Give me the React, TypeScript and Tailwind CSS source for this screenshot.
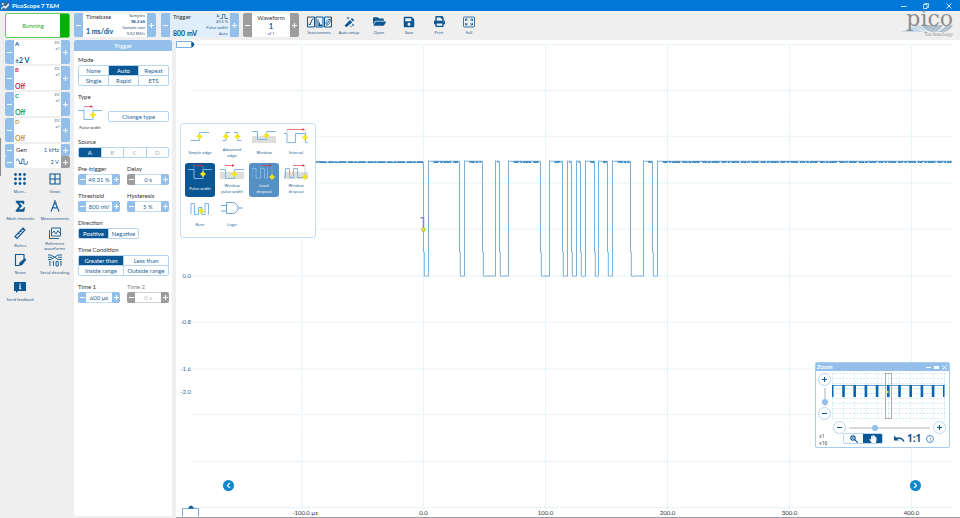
import { ReactNode } from 'react';
import clsx from 'clsx';
import { FaFolderOpen, FaHandPaper, FaPrint, FaSave } from 'react-icons/fa';
import { ChevronLeft, ChevronRight } from 'lucide-react';

/* ---------- shared controls ---------- */

function Sign({ plus }: { plus?: boolean }) {
  return (
    <svg className="h-[5px] w-[5px]" viewBox="0 0 5 5" stroke="currentColor" strokeWidth="1" aria-hidden="true">
      <path d={plus ? 'M0 2.5h5M2.5 0v5' : 'M0 2.5h5'} />
    </svg>
  );
}

function SideButton({ plus, gray, label }: { plus?: boolean; gray?: boolean; label: string }) {
  return (
    <button
      type="button"
      aria-label={label}
      className={clsx(
        'flex w-[9px] shrink-0 items-center justify-center text-white',
        gray ? 'bg-[#9d9d9f]' : 'bg-[#93bfea]',
        plus ? 'rounded-r-[2px]' : 'rounded-l-[2px]'
      )}
    >
      <Sign plus={plus} />
    </button>
  );
}

interface StepperProps {
  id: string;
  label: string;
  value: string;
  grayMinus?: boolean;
  disabled?: boolean;
}

function Stepper({ id, label, value, grayMinus, disabled }: StepperProps) {
  return (
    <div className="flex w-[42px] flex-col gap-px">
      <label htmlFor={id} className={clsx('text-[6px] leading-[8px] whitespace-nowrap', disabled && 'text-[#808080]')}>
        {label}
      </label>
      <div className="flex h-[11px]">
        <button
          type="button"
          aria-label={`Decrease ${label}`}
          className={clsx(
            'flex w-[8px] shrink-0 items-center justify-center rounded-l-[2px] text-white',
            grayMinus || disabled ? 'bg-[#9d9d9f]' : 'bg-[#93bfea]'
          )}
        >
          <Sign />
        </button>
        <input
          id={id}
          type="text"
          defaultValue={value}
          disabled={disabled}
          className={clsx(
            'w-0 min-w-0 flex-1 border-y bg-white text-center text-[6px] leading-[8px] outline-none',
            disabled ? 'border-[#d0d0d0] text-[#b9b9b9]' : 'border-[#c3def5] text-[#1c5f96]'
          )}
        />
        <button
          type="button"
          aria-label={`Increase ${label}`}
          className={clsx(
            'flex w-[8px] shrink-0 items-center justify-center rounded-r-[2px] text-white',
            disabled ? 'bg-[#9d9d9f]' : 'bg-[#93bfea]'
          )}
        >
          <Sign plus />
        </button>
      </div>
    </div>
  );
}

function Section({ title, children }: { title: string; children: ReactNode }) {
  return (
    <section className="flex flex-col gap-px">
      <h3 className="text-[6px] leading-[8px]">{title}</h3>
      {children}
    </section>
  );
}

interface ChoiceProps {
  name: string;
  options: string[];
  selected: string;
  columns: string;
  muted?: string[];
}

function Choice({ name, options, selected, columns, muted = [] }: ChoiceProps) {
  return (
    <div
      role="group"
      aria-label={name}
      className={clsx('grid gap-px overflow-hidden rounded-[2px] border border-[#b5d6f3] bg-[#b5d6f3]', columns)}
    >
      {options.map((option) => (
        <button
          key={option}
          type="button"
          aria-pressed={option === selected}
          className={clsx(
            'h-[9px] text-[6px] leading-[9px] whitespace-nowrap',
            option === selected
              ? 'bg-[#0b5794] text-white'
              : muted.includes(option)
                ? 'bg-white text-[#a9b1b8]'
                : 'bg-white text-[#1c5f96]'
          )}
        >
          {option}
        </button>
      ))}
    </div>
  );
}

/* ---------- trigger drawings ---------- */

const Diamond = ({ x, y }: { x: number; y: number }) => (
  <path
    d={`M${x} ${y - 3}l1.3 1.7 1.7 1.3-1.7 1.3-1.3 1.7-1.3-1.7-1.7-1.3 1.7-1.3z`}
    fill="#f2e61c"
    stroke="#d8cf20"
    strokeWidth=".3"
  />
);

const RedArrow = ({ from, to, y }: { from: number; to: number; y: number }) => (
  <g>
    <path d={`M${from} ${y}H${to - 1}`} stroke="#dc3c4c" strokeWidth=".7" />
    <path d={`M${to - 2.5} ${y - 1.3}L${to} ${y}l-2.5 1.3z`} fill="#dc2538" />
  </g>
);

interface Glyph {
  band?: boolean;
  line: string;
  guides?: string;
  arrow?: [number, number, number];
  diamonds: [number, number][];
}

const glyphs: Record<string, Glyph> = {
  'Simple edge': { line: 'M2.5 13.500H11.500V5.500h9.500', diamonds: [[11.5, 9.5]] },
  'Advanced edge': { line: 'M2.500 13.500H6V5.500h4M14 5.500h3.500v8h4', diamonds: [[6, 9.5], [17.5, 9.5]] },
  Window: { band: true, line: 'M0 4.500H5.500V12.500h9V4.500h9.500', diamonds: [[14.5, 8.5]] },
  Interval: { line: 'M0 6.500H3V15.500h8.500V6.500h10V15.500h2.500', guides: 'M3 3v4M21.500 3v4', arrow: [3, 21, 2.5], diamonds: [[21, 10.5]] },
  'Pulse width': { line: 'M0 6.500H6V15.500h9V6.500h9', guides: 'M6 3v4M15 3v4', arrow: [6, 15, 2.5], diamonds: [[15, 11]] },
  'Window pulse width': { band: true, line: 'M0 6.500H5.500V15.500h9V6.500h9.500', arrow: [5, 14.5, 2.5], diamonds: [[14.5, 11]] },
  'Level dropout': { line: 'M0 15V5.500h4v9.500h4.500V5.500h4v9.500h3V5.500', guides: 'M9 3v3M20 2.500V15', arrow: [9, 20, 2.5], diamonds: [[20, 14]] },
  'Window dropout': { band: true, line: 'M0 14.500h1.500V5.500h4v9h4V5.500h4v9h10', guides: 'M21 2.500V15', arrow: [9, 21, 2.5], diamonds: [[21, 14]] },
  Runt: { line: 'M3 15.500V4.500h3.500v11h4V8.500h3.500v7h3V4.500h3.500v11', diamonds: [[13, 12]] },
};

function TriggerGlyph({ name, className }: { name: string; className?: string }) {
  if (name === 'Logic') {
    return (
      <svg className={className} viewBox="0 0 24 18" fill="none" stroke="#5b9bd0" strokeWidth=".9" aria-hidden="true">
        <path d="M6.500 3.500h6a5.500 5.500 0 0 1 0 11h-6zM1 6.500h5.500M1 12h5.500M18 9h5" />
      </svg>
    );
  }
  const glyph = glyphs[name];
  return (
    <svg className={className} viewBox="0 0 24 18" fill="none" aria-hidden="true">
      {glyph.band && <path d="M0 9h24v7H0z" fill="#dededb" />}
      <path d={glyph.line} stroke="#80b6e3" strokeWidth="1" />
      {glyph.guides && <path d={glyph.guides} stroke="#80b6e3" strokeWidth=".5" />}
      {glyph.arrow && <RedArrow from={glyph.arrow[0]} to={glyph.arrow[1]} y={glyph.arrow[2]} />}
      {glyph.diamonds.map(([x, y]) => (
        <Diamond key={x} x={x} y={y} />
      ))}
    </svg>
  );
}

/* ---------- title bar and toolbar ---------- */

function TitleBar() {
  return (
    <header className="flex h-[11px] items-center gap-[3px] bg-[#0078d9] px-px text-white">
      <svg className="h-[8px] w-[8px]" viewBox="0 0 9 9" aria-hidden="true">
        <path d="M0 0h9v9H0z" fill="#3c6b94" />
        <path d="M0 7l3-3 2 1 4-4v3L5 8 3 6 0 9zM1 1h2v2H1z" fill="#e8f1f8" />
      </svg>
      <h1 className="flex-1 text-[6px] leading-[9px] font-bold">PicoScope 7 T&amp;M</h1>
      <button type="button" aria-label="Minimise" className="w-[19px]">
        <svg className="h-[6px] w-[6px]" viewBox="0 0 6 6" stroke="currentColor" strokeWidth=".8"><path d="M0 3.500h5.500" /></svg>
      </button>
      <button type="button" aria-label="Restore" className="w-[20px]">
        <svg className="h-[6px] w-[6px]" viewBox="0 0 6 6" fill="none" stroke="currentColor" strokeWidth=".7">
          <path d="M.5 1.500h3.500v4H.5zM1.500 1.500V.5h4v4H4" />
        </svg>
      </button>
      <button type="button" aria-label="Close" className="w-[13px]">
        <svg className="h-[6px] w-[6px]" viewBox="0 0 6 6" stroke="currentColor" strokeWidth=".8"><path d="M.5.5l5 5M5.500.5l-5 5" /></svg>
      </button>
    </header>
  );
}

interface ToolButtonProps {
  label: string;
  children: ReactNode;
}

function ToolButton({ label, children }: ToolButtonProps) {
  return (
    <button type="button" className="flex w-[30px] flex-col items-center gap-[2px] text-[#0b5794]">
      <span className="flex h-[13px] items-center">{children}</span>
      <span className="font-['Noto_Sans',sans-serif] text-[4px] leading-[5px] text-[#1f5583]">{label}</span>
    </button>
  );
}

function Toolbar() {
  return (
    <div className="flex h-[28px] items-center gap-1 pr-[7px] pl-[5px]">
      <button type="button" className="flex h-[25px] w-[65px] overflow-hidden rounded-[2px] border border-[#5fd05f] bg-white">
        <span className="flex-1 self-center text-[6px] text-[#1fa81f]">Running</span>
        <span className="h-full w-[9px] bg-[#06b006]" />
      </button>

      <div className="flex h-[24px] w-[82px]">
        <SideButton label="Faster timebase" />
        <div className="flex flex-1 justify-between bg-white pr-[2px] pl-[3px] whitespace-nowrap">
          <div className="flex flex-col justify-between">
            <span className="text-[6px] leading-[8px]">Timebase</span>
            <span className="text-[7px] leading-[12px] font-bold text-[#0b5794]">1 ms/div</span>
          </div>
          <div className="text-right font-['Noto_Sans',sans-serif] text-[4px] leading-[6px] text-[#2f4f70]">
            <div>Samples</div>
            <div className="font-bold text-[#0b5794]">96.2 kS</div>
            <div>Sample rate</div>
            <div>9.62 MS/s</div>
          </div>
        </div>
        <SideButton plus label="Slower timebase" />
      </div>

      <div className="ml-px flex h-[24px] w-[78px]">
        <SideButton label="Lower trigger level" />
        <div className="flex flex-1 justify-between bg-[#e0effb] pr-[2px] pl-[3px] whitespace-nowrap">
          <div className="flex flex-col justify-between">
            <span className="text-[6px] leading-[8px]">Trigger</span>
            <span className="text-[7px] leading-[8px] font-bold text-[#0b5794]">800 mV</span>
          </div>
          <div className="text-right font-['Noto_Sans',sans-serif] text-[4px] leading-[6px] text-[#2f5f8c]">
            <div className="flex items-center justify-end gap-px">
              <span>A</span>
              <svg className="h-[5px] w-[8px]" viewBox="0 0 8 5" fill="none" stroke="currentColor" strokeWidth=".8" aria-hidden="true">
                <path d="M0 4.500h2.500v-4H5v4h3" />
              </svg>
            </div>
            <div>49.3 %</div>
            <div>Pulse width</div>
            <div>Auto</div>
          </div>
        </div>
        <SideButton plus label="Raise trigger level" />
      </div>

      <div className="flex h-[24px] w-[56px]">
        <SideButton gray label="Previous waveform" />
        <div className="flex flex-1 flex-col items-center justify-between bg-white">
          <span className="text-[6px] leading-[9px]">Waveform</span>
          <span className="text-[7px] leading-[8px] font-bold text-[#0b5794]">1</span>
          <span className="font-['Noto_Sans',sans-serif] text-[4px] leading-[7px] text-[#2f4f70]">of 1</span>
        </div>
        <SideButton plus gray label="Next waveform" />
      </div>

      <nav className="ml-px flex">
        <ToolButton label="Instruments">
          <svg className="h-[12px] w-[25px]" viewBox="0 0 25 12" fill="none" stroke="currentColor" strokeWidth="1">
            <path d="M.5 1h7v10h-7zM9 1h7v10H9zM17.500 1h7v10h-7z" />
            <path d="M1.500 8l1.500 1 2-5.500L6.500 3M11 3.500v6h4M12.500 9V6.500M14 9V8" />
            <path d="M19 9.500l4.500-7M19 8c-.5-3 3-5.500 4-4.500s0 5-3 5.500" strokeWidth=".8" />
          </svg>
        </ToolButton>
        <ToolButton label="Auto setup">
          <svg className="h-[12px] w-[11px]" viewBox="0 0 11 12" fill="currentColor">
            <path d="M6 4l2.300 2.300-6 5L.5 9.500zM6.800 3.200L8 2l2.300 2.300L9 5.500zM4 .5l.5 1.200L5.700 2l-1.200.5L4 3.700l-.5-1.200L2.300 2l1.200-.3zM9 7.500l.4 1.100 1.100.4-1.100.4L9 10.500l-.4-1.100L7.500 9l1.100-.4zM6.500 10h1v1h-1z" />
          </svg>
        </ToolButton>
        <ToolButton label="Open"><FaFolderOpen className="h-[13px] w-[13px]" /></ToolButton>
        <ToolButton label="Save"><FaSave className="h-[12px] w-[12px]" /></ToolButton>
        <ToolButton label="Print"><FaPrint className="h-[11px] w-[11px]" /></ToolButton>
        <ToolButton label="Full">
          <svg className="h-[12px] w-[12px]" viewBox="0 0 12 12" fill="none" stroke="currentColor" strokeWidth=".8">
            <rect x=".5" y="1" width="11" height="10" rx="1" />
            <path d="M2.500 5V3h2M7.500 3h2v2M9.500 7v2h-2M4.500 9h-2V7M2.500 3l2 2M9.500 3l-2 2M9.500 9l-2-2M2.500 9l2-2" />
          </svg>
        </ToolButton>
      </nav>

      <div className="relative ml-auto h-[28px] w-[52px] text-right text-[#8b8e92]">
        <svg className="absolute inset-x-0 top-[13px] h-[9px] w-full" viewBox="0 0 52 9" aria-hidden="true">
          <path d="M0 8Q11 4 15 1q3 7 9 7zM14 1q6 0 9 4t8 3Q21 9 14 1z" fill="#c5d9e9" />
          <path d="M20 1q6 7 12 7t10-7zM34 8q8-1 11-7h7q-4 7-10 7z" fill="#a9bccb" />
          <path d="M27 8l7-7M32 8l7-7M37 8l7-7M42 8l7-7" stroke="#efefef" strokeWidth=".5" />
        </svg>
        <div className="relative font-['DejaVu_Serif',serif] text-[22px] leading-[16px]">pico</div>
        <div className="relative font-['DejaVu_Serif',serif] text-[5px] leading-[15px]">Technology</div>
      </div>
    </div>
  );
}

/* ---------- left column ---------- */

const channels = [
  { name: 'A', range: '±2 V', color: 'text-[#0b5794]' },
  { name: 'B', range: 'Off', color: 'text-[#dc1f45]' },
  { name: 'C', range: 'Off', color: 'text-[#159a53]' },
  { name: 'D', range: 'Off', color: 'text-[#c49a35]' },
];

function ChannelCard({ name, range, color }: { name: string; range: string; color: string }) {
  return (
    <div className="flex h-[24px]">
      <SideButton label={`Decrease channel ${name} range`} />
      <div className="flex flex-1 justify-between bg-white px-px">
        <div className={clsx('flex flex-col justify-between', color)}>
          <span className="text-[6px] leading-[8px] font-bold">{name}</span>
          <span className="text-[7px] leading-[8px] font-bold">{range}</span>
        </div>
        <div className="text-right font-['Noto_Sans',sans-serif] text-[4px] leading-[6px] text-[#2f4f70]">
          <div>DC</div>
          <div>x1</div>
        </div>
      </div>
      <SideButton plus label={`Increase channel ${name} range`} />
    </div>
  );
}

const tools: { label: string; icon: ReactNode }[] = [
  {
    label: 'More...',
    icon: (
      <g fill="currentColor" stroke="none">
        {[2.5, 7, 11.5].map((y) => [2.5, 7, 11.5].map((x) => <circle key={`${x}-${y}`} cx={x} cy={y} r="1.400" />))}
      </g>
    ),
  },
  { label: 'Views', icon: <path d="M2 2h10v10H2zM7 2v10M2 7h10" /> },
  { label: 'Math channels', icon: <path d="M3 2h8v3h-.8L9 3.500H6L9 7l-3.500 3.500h4L11 8.500h.8L11 12.500H3v-1L6.500 7 3 3z" fill="currentColor" strokeWidth=".5" /> },
  { label: 'Measurements', icon: <path d="M7 1v2M6.300 4.500L3 12.500M7.700 4.500l3.300 8M5 8.500q2.500 1 4 0M7 3a1 1 0 1 0 .1 0" /> },
  { label: 'Rulers', icon: <path d="M2 10.500L10 2l2 2-8 8.500zM5.500 7l1 1M7.500 5l1 1M9.500 3l1 1" /> },
  { label: 'Reference waveforms', icon: <path d="M3.500 2h9v8h-9zM1.500 4v8.500h9.500M4 7.500l2-2.500 2 3 2-3.500 2 3" strokeWidth=".9" /> },
  { label: 'Notes', icon: <g><path d="M11 6V1.500H2.500v11H6" /><path d="M12 5l1 2-4 5-3 .8.500-3z" fill="currentColor" strokeWidth=".3" /></g> },
  { label: 'Serial decoding', icon: <path d="M0 2h3l7 4.500h4M0 6.500h3L10 2h4M0 4.300h4M10 4.300h4M1 9l1-.7V13M4.500 9l1-.7V13M8 8.500h2.200V13H8zM12 9l1-.7V13" strokeWidth=".9" /> },
  {
    label: 'Send feedback',
    icon: (
      <g stroke="none">
        <path d="M1 2h12v9H5l-2 2v-2H1z" fill="currentColor" />
        <path d="M6.500 3.500h1.200v1.200H6.500zM6 5.500h1.700v3h.6v.8H6v-.8h.6v-2H6z" fill="#fff" />
      </g>
    ),
  },
];

function LeftColumn() {
  return (
    <aside className="relative flex w-[74px] shrink-0 flex-col gap-1 pt-px pr-1 pl-[5px]">
      <div className="absolute top-[99px] left-0 h-[38px] w-px bg-[#8a8a8a]" />
      <div className="flex flex-col gap-[2px]">
        {channels.map((channel) => (
          <ChannelCard key={channel.name} {...channel} />
        ))}
        <div className="flex flex-col">
          <div className="flex h-[12px]">
            <SideButton label="Decrease generator frequency" />
            <div className="flex flex-1 items-center justify-between bg-white px-[2px] text-[6px] leading-[8px]">
              <span>Gen</span>
              <span className="text-[#1c5f96]">1 kHz</span>
            </div>
            <SideButton plus label="Increase generator frequency" />
          </div>
          <div className="flex h-[12px]">
            <SideButton label="Decrease generator amplitude" />
            <div className="flex flex-1 items-center justify-between bg-white px-[2px] text-[6px] leading-[8px] text-[#1c5f96]">
              <svg className="h-[8px] w-[12px]" viewBox="0 0 12 8" fill="none" stroke="currentColor" strokeWidth=".8" aria-hidden="true">
                <path d="M0 3q1.500-4 3 0t3 0V1h2v5h1.500q.8 2 1.500 0T12 3M3 5.500h4" />
              </svg>
              <span>2 V</span>
            </div>
            <SideButton plus gray label="Increase generator amplitude" />
          </div>
        </div>
      </div>
      <nav className="-mx-[2px] grid grid-cols-2 gap-y-[2px]">
        {tools.map((tool) => (
          <button key={tool.label} type="button" className="flex h-[25px] flex-col items-center text-[#0b5794]">
            <svg className="h-[14px] w-[14px] shrink-0" viewBox="0 0 14 14" fill="none" stroke="currentColor" strokeWidth="1.100" aria-hidden="true">
              {tool.icon}
            </svg>
            <span
              className={clsx(
                "flex h-[11px] items-center text-center font-['Noto_Sans',sans-serif] text-[4px] leading-[5px] text-[#1f5583]",
                tool.label === 'Reference waveforms' ? 'w-[24px]' : 'whitespace-nowrap'
              )}
            >
              {tool.label}
            </span>
          </button>
        ))}
      </nav>
    </aside>
  );
}

/* ---------- trigger panel ---------- */

function TriggerPanel() {
  return (
    <aside className="mt-px mb-[2px] w-[98px] shrink-0 rounded-[2px] bg-white">
      <h2 className="rounded-t-[2px] bg-[#93bfea] text-center text-[6px] leading-[11px] text-white">Trigger</h2>
      <div className="flex flex-col gap-[7px] pt-[5px] pr-[3px] pl-1">
        <Section title="Mode">
          <Choice name="Mode" columns="grid-cols-3" selected="Auto" options={['None', 'Auto', 'Repeat', 'Single', 'Rapid', 'ETS']} />
        </Section>
        <Section title="Type">
          <div className="flex h-[29px] justify-between">
            <div className="flex w-[24px] flex-col items-center pt-[2px]">
              <TriggerGlyph name="Pulse width" className="h-[18px] w-[24px] shrink-0" />
              <span className="mt-[3px] font-['Noto_Sans',sans-serif] text-[4px] leading-[5px] whitespace-nowrap">Pulse width</span>
            </div>
            <button
              type="button"
              className="mt-[9px] h-[11px] w-[61px] rounded-[2px] border border-[#b5d6f3] text-[6px] leading-[9px] text-[#1c5f96]"
            >
              Change type
            </button>
          </div>
        </Section>
        <Section title="Source">
          <Choice name="Source" columns="grid-cols-4" selected="A" muted={['B', 'C', 'D']} options={['A', 'B', 'C', 'D']} />
        </Section>
        <div className="flex justify-between">
          <Stepper id="pre-trigger" label="Pre-trigger" value="49.31 %" />
          <Stepper id="delay" label="Delay" value="0 s" grayMinus />
        </div>
        <div className="flex justify-between">
          <Stepper id="threshold" label="Threshold" value="800 mV" />
          <Stepper id="hysteresis" label="Hysteresis" value="5 %" />
        </div>
        <Section title="Direction">
          <div className="w-[61px]">
            <Choice name="Direction" columns="grid-cols-2" selected="Positive" options={['Positive', 'Negative']} />
          </div>
        </Section>
        <Section title="Time Condition">
          <Choice
            name="Time Condition"
            columns="grid-cols-2"
            selected="Greater than"
            options={['Greater than', 'Less than', 'Inside range', 'Outside range']}
          />
        </Section>
        <div className="flex justify-between">
          <Stepper id="time-1" label="Time 1" value="600 µs" />
          <Stepper id="time-2" label="Time 2" value="0 s" disabled />
        </div>
      </div>
    </aside>
  );
}

const triggerTypes = [
  'Simple edge',
  'Advanced edge',
  'Window',
  'Interval',
  'Pulse width',
  'Window pulse width',
  'Level dropout',
  'Window dropout',
  'Runt',
  'Logic',
];

function TriggerTypeMenu() {
  return (
    <div className="absolute top-[83px] left-1 grid h-[115px] w-[136px] auto-rows-[34px] grid-cols-4 gap-[2px] rounded-[3px] border border-[#c3def5] bg-white px-1 pt-[3px]">
      {triggerTypes.map((type) => (
        <button
          key={type}
          type="button"
          className={clsx(
            'flex flex-col items-center rounded-[3px]',
            type === 'Pulse width' && 'bg-[#0b5794] text-white',
            type === 'Level dropout' && 'bg-[#5590c5] text-white',
            type !== 'Pulse width' && type !== 'Level dropout' && 'text-[#1c5f96]'
          )}
        >
          <TriggerGlyph name={type} className="h-[18px] w-[24px] shrink-0" />
          <span
            className={clsx(
              "flex h-[16px] items-center justify-center text-center font-['Noto_Sans',sans-serif] text-[4px] leading-[6px]",
              type === 'Simple edge' ? 'whitespace-nowrap' : 'w-[23px]'
            )}
          >
            {type}
          </span>
        </button>
      ))}
    </div>
  );
}

/* ---------- scope view ---------- */

const PLOT_W = 784;
const PLOT_H = 478;
const HIGH = 122.5;
const LOW = 236.5;

// [start of fall, start of rise] of every low pulse
const pulses: [number, number][] = [
  [247.5, 252.5],
  [283.5, 288.5],
  [306.5, 319.5],
  [323.5, 332.5],
  [364.5, 373.5],
  [386.5, 391.5],
  [395.5, 400.5],
  [404.5, 409.5],
  [418.5, 422.5],
  [431.5, 436.5],
  [454.5, 467.5],
  [476.5, 481.5],
];

function tracePath() {
  let d = `M15 ${HIGH}`;
  pulses.forEach(([fall, rise]) => {
    d += `H${fall}V${LOW - 24}h.8V${LOW}l1 .7 1.500-.7H${rise}V${HIGH - 1.5}l1 .5`;
  });
  return `${d}H776`;
}

function noisePath() {
  const starts = [15, ...pulses.map((p) => p[1])];
  const ends = [...pulses.map((p) => p[0]), 776];
  return starts
    .map((start, i) => {
      let d = '';
      const lead = i === 0 ? 0 : Math.min(5, (ends[i] - start) / 2);
      for (let x = start + lead; x < ends[i]; x += 1) {
        const y = HIGH + ((Math.floor(x) * 7 + i * 3) % 11 > 3 ? 0 : -0.6);
        d += `${d ? 'L' : 'M'}${x} ${y}`;
      }
      return d;
    })
    .join('');
}

const voltLabels = [
  { text: '0.0', y: 236.5 },
  { text: '-0.8', y: 283 },
  { text: '-1.6', y: 329.5 },
  { text: '-2.0', y: 352.5 },
];

const timeLabels = [
  { text: '-100.0 µs', x: 129 },
  { text: '0.0', x: 247.5 },
  { text: '100.0', x: 369.5 },
  { text: '200.0', x: 491.5 },
  { text: '300.0', x: 613.5 },
  { text: '400.0', x: 735.5 },
];

const gridX = [126, 247.5, 369.5, 491.5, 613.5, 735.5];
const gridY = [4.5, 50.5, 96.5, 143.5, 189.5, 236.5, 282.5, 329.5, 375.5, 422.5, 468.5];

function ZoomWindow() {
  const round = 'flex h-[13px] w-[13px] shrink-0 items-center justify-center rounded-full border border-[#b5d6f3] bg-white text-[#0b5794]';
  const range = 'h-[2px] flex-1 min-w-0 appearance-none bg-[#d8d8dc] [&::-webkit-slider-thumb]:h-[6px] [&::-webkit-slider-thumb]:w-[6px] [&::-webkit-slider-thumb]:appearance-none [&::-webkit-slider-thumb]:rounded-full [&::-webkit-slider-thumb]:bg-[#93bfea]';
  return (
    <section className="absolute right-[10px] bottom-[69px] w-[135px] rounded-[2px] border border-[#a9cdee] bg-white">
      <header className="flex h-[8px] items-center gap-[3px] bg-[#93bfea] pr-[2px] pl-px text-white">
        <h2 className="flex-1 text-[6px] leading-[8px] font-bold">Zoom</h2>
        <button type="button" aria-label="Minimise zoom">
          <svg className="h-[5px] w-[5px]" viewBox="0 0 5 5" stroke="currentColor"><path d="M0 2.500h5" /></svg>
        </button>
        <button type="button" aria-label="Dock zoom" className="h-[3px] w-[5px] bg-white" />
        <button type="button" aria-label="Close zoom">
          <svg className="h-[5px] w-[5px]" viewBox="0 0 5 5" stroke="currentColor" strokeWidth=".9"><path d="M.3.3l4.400 4.400M4.700.3L.3 4.700" /></svg>
        </button>
      </header>
      <div className="flex gap-px pt-[2px] pr-1 pl-[2px]">
        <div className="flex w-[13px] flex-col items-center">
          <button type="button" aria-label="Zoom in vertically" className={round}><Sign plus /></button>
          <div className="flex h-[21px] items-center justify-center">
            <input
              type="range"
              aria-label="Vertical zoom"
              defaultValue={8}
              className="h-[18px] w-[2px] appearance-none bg-[#d8d8dc] [direction:rtl] [writing-mode:vertical-lr] [&::-webkit-slider-thumb]:h-[6px] [&::-webkit-slider-thumb]:w-[6px] [&::-webkit-slider-thumb]:appearance-none [&::-webkit-slider-thumb]:rounded-full [&::-webkit-slider-thumb]:bg-[#93bfea]"
            />
          </div>
          <button type="button" aria-label="Zoom out vertically" className={round}><Sign /></button>
        </div>
        <svg className="h-[46px] min-w-0 flex-1" viewBox="0 0 113 46" preserveAspectRatio="none" aria-label="Overview">
          <g stroke="#b9dbe9" strokeWidth=".6" strokeDasharray="2 1.500">
            {Array.from({ length: 11 }, (_, i) => (
              <path key={`v${i}`} d={`M${0.5 + i * 11.2} 0V46`} />
            ))}
            {Array.from({ length: 10 }, (_, i) => (
              <path key={`h${i}`} d={`M0 ${0.5 + i * 5}H113`} />
            ))}
          </g>
          <path d="M0 12.500H112.500" stroke="#5b9fd0" strokeWidth="1" />
          {Array.from({ length: 11 }, (_, i) => (
            <rect key={i} x={i === 0 ? 0 : i * 11.2 - 1} y="12" width={i === 0 || i === 10 ? 1.5 : 2.6} height="12" fill="#0767b0" />
          ))}
          <rect x="53.500" y=".5" width="6" height="45" fill="none" stroke="#999" strokeWidth=".8" />
          <rect x="54.500" y="18" width="2" height="2" fill="#f2e61c" />
        </svg>
      </div>
      <div className="-mt-[2px] flex flex-col pr-[3px]">
        <div className="flex items-center gap-[3px] pt-[3px] pl-[17px]">
          <button type="button" aria-label="Zoom out horizontally" className={round}><Sign /></button>
          <input type="range" aria-label="Horizontal zoom" defaultValue={31} className={range} />
          <button type="button" aria-label="Zoom in horizontally" className={round}><Sign plus /></button>
        </div>
        <div className="-mt-px flex h-[14px] items-start">
          <div className="w-[23px] pl-[3px] font-['Noto_Sans',sans-serif] text-[5px] leading-[7px] text-[#444]">
            <div>x1</div>
            <div>x16</div>
          </div>
          <div className="ml-1 flex h-[11px] w-[40px] overflow-hidden rounded-[2px] border border-[#b5d6f3]">
            <button type="button" aria-label="Magnify" className="flex flex-1 items-center justify-center text-[#0b5794]">
              <svg className="h-[8px] w-[8px]" viewBox="0 0 8 8" fill="none" stroke="currentColor" strokeWidth="1.200">
                <circle cx="3" cy="3" r="2.200" />
                <path d="M4.700 4.700l3 3M2 3h2" />
              </svg>
            </button>
            <button type="button" aria-label="Pan" className="flex flex-1 items-center justify-center bg-[#0b5794] text-white">
              <FaHandPaper className="h-[8px] w-[8px]" />
            </button>
          </div>
          <button type="button" aria-label="Undo zoom" className="mt-[2px] ml-[10px] text-[#0b5794]">
            <svg className="h-[8px] w-[12px]" viewBox="0 0 12 8" fill="none" stroke="currentColor" strokeWidth="1.500">
              <path d="M1.500 4Q8 1 11 6.500" />
              <path d="M1 .5v5h5z" fill="currentColor" stroke="none" />
            </svg>
          </button>
          <button type="button" className="ml-[2px] font-['Noto_Sans',sans-serif] text-[10px] leading-[11px] font-bold text-[#0b5794]">1:1</button>
          <button
            type="button"
            aria-label="Zoom information"
            className="mt-[2px] ml-[5px] flex h-[8px] w-[8px] items-center justify-center rounded-full border border-[#4f93c8] text-[5px] leading-[6px] text-[#0b5794]"
          >
            i
          </button>
        </div>
      </div>
    </section>
  );
}

function ScopeView() {
  const arrow = 'absolute bottom-[26px] flex h-[11px] w-[11px] items-center justify-center rounded-full bg-[#0a86cf] text-white';
  return (
    <main className="relative mt-px ml-1 min-w-0 flex-1 border-b border-[#9a9aae] bg-white">
      <svg
        className="absolute inset-0 h-full w-full"
        viewBox={`0 0 ${PLOT_W} ${PLOT_H}`}
        preserveAspectRatio="none"
        fill="none"
        aria-label="Channel A waveform"
      >
        <g stroke="#d3e9f0" strokeDasharray="1 1">
          {gridX.map((x) => (
            <path key={x} d={`M${x} 5V470`} />
          ))}
          {gridY.map((y) => (
            <path key={y} d={`M16 ${y}H776`} />
          ))}
        </g>
        <path d={tracePath()} stroke="#6ba6d3" strokeWidth=".9" />
        <path d={noisePath()} stroke="#2a7db8" strokeWidth="1.300" strokeDasharray="6 1 3 1 9 2" />
        <path d="M244.500 178h3v10" stroke="#8585c8" strokeWidth="1.500" />
        <circle cx="247.500" cy="190" r="1.900" fill="#f2e61c" stroke="#8f9a3a" strokeWidth=".6" />
      </svg>

      {voltLabels.map(({ text, y }) => (
        <span
          key={text}
          className="absolute left-0 w-[15px] -translate-y-1/2 text-right text-[6px] leading-[8px] text-[#2b6a9c]"
          style={{ top: `${(y / PLOT_H) * 100}%` }}
        >
          {text}
        </span>
      ))}
      {timeLabels.map(({ text, x }) => (
        <span
          key={text}
          className="absolute bottom-0 -translate-x-1/2 text-[6px] leading-[8px] whitespace-nowrap"
          style={{ left: `${(x / PLOT_W) * 100}%` }}
        >
          {text}
        </span>
      ))}

      <svg className="absolute top-0 left-0 h-[8px] w-[20px]" viewBox="0 0 20 8" aria-hidden="true">
        <path d="M.5 1.500h15v6H.5z" fill="#fff" stroke="#5b9bd0" strokeWidth=".8" />
        <path d="M15.500 1.500q2 .5 3 3-1 2.500-3 3z" fill="#0b5794" />
      </svg>
      <svg className="absolute bottom-0 left-[6px] h-[13px] w-[17px]" viewBox="0 0 17 13" aria-hidden="true">
        <path d="M.5 12.500V4.500h16v8" fill="#fff" stroke="#5b9bd0" strokeWidth=".8" />
        <path d="M6 4.500q.5-2 3-3 2.500 1 3 3z" fill="#0b5794" />
      </svg>

      <button type="button" aria-label="Scroll left" className={clsx(arrow, 'left-[47px]')}>
        <ChevronLeft className="h-[9px] w-[9px]" strokeWidth={3} />
      </button>
      <button type="button" aria-label="Scroll right" className={clsx(arrow, 'right-[39px]')}>
        <ChevronRight className="h-[9px] w-[9px]" strokeWidth={3} />
      </button>

      <TriggerTypeMenu />
      <ZoomWindow />
    </main>
  );
}

export default function App() {
  return (
    <div className="flex min-h-screen flex-col bg-[#efefef] font-[Lato,sans-serif] text-[#333]">
      <TitleBar />
      <Toolbar />
      <div className="flex flex-1">
        <LeftColumn />
        <TriggerPanel />
        <ScopeView />
      </div>
    </div>
  );
}
